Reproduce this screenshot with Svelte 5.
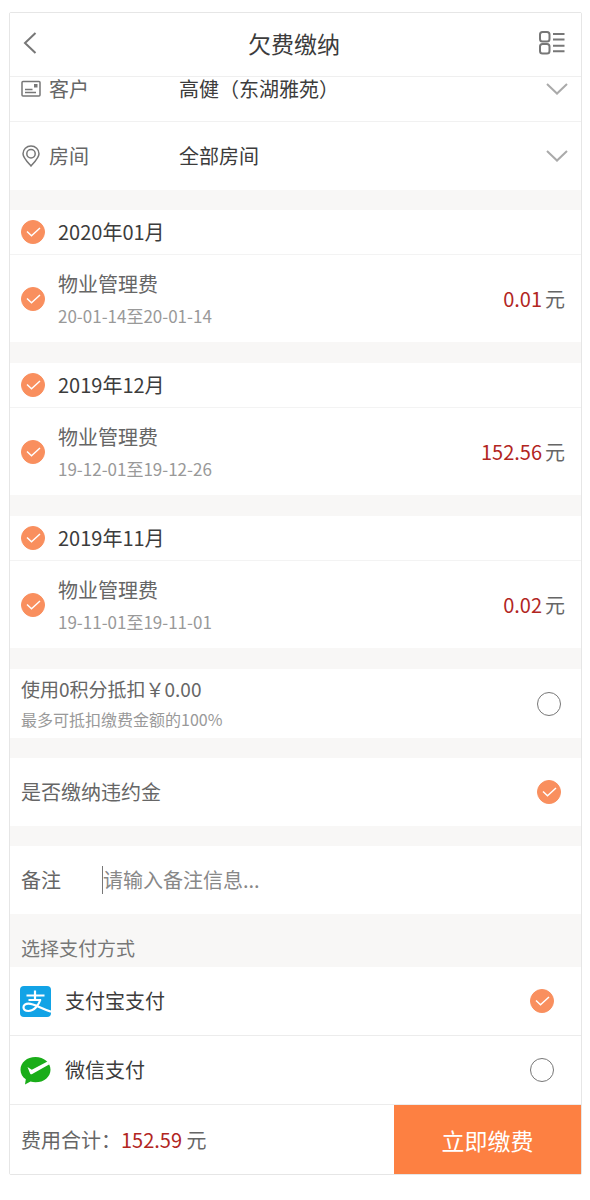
<script>
  let customer = $state('gaojian');
  let room = $state('all');
  let usePoints = $state(false);
  let payPenalty = $state(true);
  let remark = $state('');
  let payMethod = $state('alipay');

  let bills = $state([
    { month: '2020年01月', name: '物业管理费', period: '20-01-14至20-01-14', amount: 0.01, monthChecked: true, checked: true },
    { month: '2019年12月', name: '物业管理费', period: '19-12-01至19-12-26', amount: 152.56, monthChecked: true, checked: true },
    { month: '2019年11月', name: '物业管理费', period: '19-11-01至19-11-01', amount: 0.02, monthChecked: true, checked: true }
  ]);

  let total = $derived(bills.reduce((sum, bill) => sum + (bill.checked ? bill.amount : 0), 0));

  function toggleMonth(bill) {
    bill.checked = bill.monthChecked;
  }

  function toggleItem(bill) {
    bill.monthChecked = bill.checked;
  }
</script>

{#snippet tick()}
  <svg class="tick-mark" viewBox="0 0 24 24" aria-hidden="true">
    <path d="M6 11.5l4.5 4.2L19 8" />
  </svg>
{/snippet}

{#snippet chevron()}
  <svg class="chevron" viewBox="0 0 22 14" aria-hidden="true">
    <path d="M1 2l10 9.5L21 2" />
  </svg>
{/snippet}

<main class="page">
  <header class="header">
    <button class="icon-btn back" type="button" aria-label="返回">
      <svg width="14" height="22" viewBox="0 0 14 22"><path d="M12.5 1L2 11l10.5 10" /></svg>
    </button>
    <h1>欠费缴纳</h1>
    <button class="icon-btn menu" type="button" aria-label="账单">
      <svg width="26" height="24" viewBox="0 0 26 24">
        <rect x="1" y="1" width="9.5" height="9.5" rx="2.5" />
        <rect x="1" y="13" width="9.5" height="9.5" rx="2.5" />
        <path d="M14 3h11.5M14 8.5h11.5M14 14.7h11.5M14 20.2h11.5" />
      </svg>
    </button>
  </header>

  <div class="field customer">
    <label for="customer">
      <svg width="20" height="18" viewBox="0 0 20 18" aria-hidden="true">
        <rect x="1" y="1.5" width="18" height="14.5" rx="1" />
        <path d="M4 9.5h7.5M4 12.5h11" />
        <path class="fill" d="M13 4h3.5v3.5H13z" />
      </svg>
      客户
    </label>
    <select id="customer" bind:value={customer}>
      <option value="gaojian">高健（东湖雅苑）</option>
    </select>
    {@render chevron()}
  </div>

  <div class="field">
    <label for="room">
      <svg width="20" height="22" viewBox="0 0 20 22" aria-hidden="true">
        <path d="M10 21C6 16.5 2 12.5 2 8.7a8 7.7 0 0 1 16 0C18 12.5 14 16.5 10 21z" />
        <circle cx="10" cy="8.7" r="4.2" />
      </svg>
      房间
    </label>
    <select id="room" bind:value={room}>
      <option value="all">全部房间</option>
    </select>
    {@render chevron()}
  </div>

  {#each bills as bill}
    <section class="bill">
      <label class="bill-month">
        <span class="tick">
          <input type="checkbox" bind:checked={bill.monthChecked} onchange={() => toggleMonth(bill)} />
          {@render tick()}
        </span>
        {bill.month}
      </label>
      <label class="bill-item">
        <span class="tick">
          <input type="checkbox" bind:checked={bill.checked} onchange={() => toggleItem(bill)} />
          {@render tick()}
        </span>
        <span class="bill-info">
          <span class="bill-name">{bill.name}</span>
          <span class="bill-period">{bill.period}</span>
        </span>
        <span class="bill-amount"><em>{bill.amount.toFixed(2)}</em>元</span>
      </label>
    </section>
  {/each}

  <label class="option points">
    <span>
      <span class="points-title">使用0积分抵扣￥0.00</span>
      <span class="points-hint">最多可抵扣缴费金额的100%</span>
    </span>
    <span class="tick">
      <input type="checkbox" bind:checked={usePoints} />
      {@render tick()}
    </span>
  </label>

  <label class="option">
    是否缴纳违约金
    <span class="tick">
      <input type="checkbox" bind:checked={payPenalty} />
      {@render tick()}
    </span>
  </label>

  <div class="remark">
    <label for="remark">备注</label>
    <div class="remark-box">
      <input id="remark" type="text" placeholder="请输入备注信息..." bind:value={remark} />
    </div>
  </div>

  <h2>选择支付方式</h2>

  <label class="pay">
    <svg width="31" height="31" viewBox="0 0 31 31" aria-hidden="true">
      <rect width="31" height="31" rx="4" fill="#12a3e6" />
      <g fill="none" stroke="#fff" stroke-width="2.2">
        <path d="M6.5 9.5h18M15 4.5v9.500M8.500 14h12.500" />
        <path d="M20.500 13.500C18.500 19.500 14 25 8.500 25c-3.500 0-5-1.700-5-3.700s2-3.600 5-3.600c5.500 0 11 4 22.500 8" />
      </g>
    </svg>
    <span class="pay-name">支付宝支付</span>
    <span class="tick">
      <input type="radio" name="pay" value="alipay" bind:group={payMethod} />
      {@render tick()}
    </span>
  </label>

  <label class="pay">
    <svg width="31" height="31" viewBox="0 0 31 31" aria-hidden="true">
      <path fill="#1aad19" d="M15.500 2C7 2 .5 7.500.5 14.700c0 4 2 7.300 5.300 9.500L5 29.500l5.500-3c1.700.6 3.200.8 5 .8 8.500 0 15-5.500 15-12.600S24 2 15.500 2z" />
      <path fill="#fff" d="M7.500 12l4.300 2.700L27.500 6.500l2 2.700L12.200 19c-.8.500-1.700.3-2.100-.6z" />
    </svg>
    <span class="pay-name">微信支付</span>
    <span class="tick">
      <input type="radio" name="pay" value="wechat" bind:group={payMethod} />
      {@render tick()}
    </span>
  </label>

  <footer class="footer">
    <p>费用合计：<em>{total.toFixed(2)}</em> 元</p>
    <button class="submit" type="button">立即缴费</button>
  </footer>
</main>

<style>
  :global(body) {
    margin: 0;
    background: #fff;
  }

  .page {
    margin: 12px 8px 12px 9px;
    border: 1px solid #e6e6e6;
    border-radius: 2px;
    background: #f8f7f6;
    color: #666;
    font-family: 'Noto Sans CJK SC', sans-serif;
    font-size: 20px;
    line-height: 28px;
  }

  .page * {
    box-sizing: border-box;
  }

  svg {
    flex: none;
    fill: none;
    stroke: #777;
    stroke-width: 1.5;
  }

  em {
    color: #b2261f;
    font-style: normal;
  }

  button,
  select,
  input {
    margin: 0;
    padding: 0;
    border: 0;
    background: none;
    color: inherit;
    font: inherit;
  }

  .header {
    display: flex;
    align-items: center;
    justify-content: space-between;
    height: 64px;
    padding: 0 16px 3px 13px;
    border-bottom: 1px solid #efefef;
    background: #fff;
  }

  .header h1 {
    margin: 0;
    color: #3c3c3c;
    font-size: 23px;
    font-weight: 400;
  }

  .icon-btn {
    display: flex;
    align-items: center;
    width: 32px;
    height: 32px;
  }

  .icon-btn svg {
    stroke-width: 2;
  }

  .icon-btn.menu {
    justify-content: flex-end;
  }

  .field {
    display: flex;
    align-items: center;
    height: 68px;
    padding: 0 13px 0 11px;
    background: #fff;
  }

  /* first row is partly scrolled under the header */
  .field.customer {
    height: 45px;
    padding-bottom: 20px;
    border-bottom: 1px solid #f1f1f1;
  }

  .field label {
    display: flex;
    flex: 0 0 158px;
    align-items: center;
    gap: 8px;
  }

  .field select {
    flex: 1;
    min-width: 0;
    appearance: none;
    color: #3c3c3c;
  }

  .fill {
    fill: #777;
    stroke: none;
  }

  .chevron {
    width: 22px;
    height: 14px;
    stroke: #aaa;
    stroke-width: 2;
  }

  .bill {
    margin-top: 21px;
    background: #fff;
  }

  .field + .bill {
    margin-top: 20px;
  }

  .bill-month,
  .bill-item {
    display: flex;
    align-items: center;
    gap: 13px;
    padding: 0 16px 0 11px;
  }

  .bill-month {
    height: 45px;
    border-bottom: 1px solid #f3f3f3;
    color: #3c3c3c;
  }

  .bill-item {
    height: 87px;
  }

  .bill-info {
    flex: 1;
  }

  .bill-name,
  .bill-period,
  .points-title,
  .points-hint {
    display: block;
  }

  .bill-info {
    padding-top: 2px;
  }

  .bill-period {
    padding-top: 4px;
    color: #999;
    font-size: 17px;
  }

  .bill-amount em {
    margin-right: 3px;
  }

  .tick {
    display: grid;
    flex: none;
    width: 24px;
    height: 24px;
  }

  .tick input,
  .tick-mark {
    grid-area: 1 / 1;
    width: 24px;
    height: 24px;
  }

  .tick input {
    appearance: none;
    border: 1px solid #777;
    border-radius: 50%;
  }

  .tick input:checked {
    border-color: #f98f5e;
    background: #f98f5e;
  }

  .tick-mark {
    stroke: #fff;
    pointer-events: none;
    visibility: hidden;
  }

  .tick input:checked + .tick-mark {
    visibility: visible;
  }

  .option {
    display: flex;
    align-items: center;
    justify-content: space-between;
    height: 68px;
    margin-top: 20px;
    padding: 0 20px 0 11px;
    background: #fff;
  }

  .option.points {
    height: 69px;
    margin-top: 21px;
  }

  .points-title {
    font-size: 19px;
  }

  .points-hint {
    padding-top: 2px;
    color: #999;
    font-size: 16px;
  }

  .remark {
    display: flex;
    align-items: center;
    height: 68px;
    margin-top: 20px;
    padding: 0 11px;
    background: #fff;
  }

  .remark > label {
    width: 81px;
  }

  .remark-box {
    flex: 1;
    border-left: 1px solid #777;
  }

  .remark-box input {
    display: block;
    width: 100%;
    height: 28px;
    outline: none;
  }

  .remark-box input::placeholder {
    color: #888;
    opacity: 1;
  }

  h2 {
    margin: 0;
    padding: 20px 11px 5px;
    color: #777;
    font-size: 19px;
    font-weight: 400;
  }

  .pay {
    display: flex;
    align-items: center;
    height: 69px;
    padding: 0 27px 0 10px;
    border-bottom: 1px solid #ececec;
    background: #fff;
  }

  .pay > svg {
    stroke: none;
  }

  .pay-name {
    flex: 1;
    padding-left: 14px;
    color: #3c3c3c;
  }

  .footer {
    display: flex;
    align-items: center;
    justify-content: space-between;
    height: 69px;
    padding-left: 11px;
    background: #fff;
  }

  .footer p {
    margin: 0;
  }

  .submit {
    align-self: stretch;
    flex: 0 0 187px;
    background: #fd8042;
    color: #fff;
    font-size: 23px;
  }
</style>
